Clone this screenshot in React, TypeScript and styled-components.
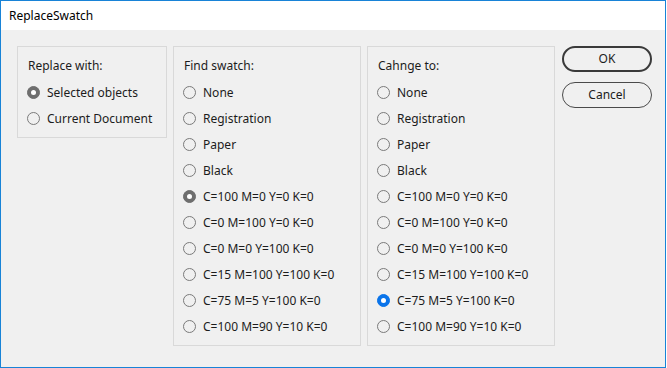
import React, { ReactElement } from 'react';
import styled, { createGlobalStyle } from 'styled-components';

const GlobalStyle = createGlobalStyle`
  html, body {
    margin: 0;
    padding: 0;
    background: #ffffff;
  }
  body {
    font-family: 'Noto Sans', 'Open Sans', sans-serif;
    font-size: 12px;
    color: #1c1c1c;
  }
`;

const Window = styled.div`
  width: 666px;
  height: 368px;
  box-sizing: border-box;
  border: 1px solid #1883d7;
  background-color: #f0f0f0;
  display: flex;
  flex-direction: column;
`;

const TitleBar = styled.div`
  height: 29px;
  flex-shrink: 0;
  background-color: #ffffff;
  display: flex;
  align-items: center;
  padding-left: 8px;
  font-size: 12px;
  color: #000000;
`;

const Body = styled.div`
  display: flex;
  align-items: flex-start;
  gap: 6px;
  padding: 16px 0 0 16px;
`;

const Group = styled.div<{ width: number }>`
  width: ${(p) => p.width}px;
  box-sizing: border-box;
  border: 1px solid #d9d9d9;
  padding: 6px 0 6px 9px;
  display: flex;
  flex-direction: column;
`;

const GroupTitle = styled.div`
  height: 26px;
  line-height: 26px;
  padding-left: 1px;
  white-space: nowrap;
`;

const RadioRow = styled.label`
  height: 26px;
  display: flex;
  align-items: center;
  gap: 7px;
  white-space: nowrap;
`;

const RadioMark = styled.span<{ checked?: boolean; tone?: 'grey' | 'blue' }>`
  width: 13px;
  height: 13px;
  box-sizing: border-box;
  border-radius: 50%;
  flex-shrink: 0;
  position: relative;
  border: 1px solid
    ${(p) => (!p.checked ? '#7a7a7a' : p.tone === 'blue' ? '#0a74ea' : '#6e6e6e')};
  background-color: ${(p) =>
    !p.checked ? 'transparent' : p.tone === 'blue' ? '#0a74ea' : '#6e6e6e'};

  &::after {
    content: '';
    display: ${(p) => (p.checked ? 'block' : 'none')};
    position: absolute;
    left: 3px;
    top: 3px;
    width: 5px;
    height: 5px;
    border-radius: 50%;
    background-color: #ffffff;
  }
`;

const ButtonColumn = styled.div`
  display: flex;
  flex-direction: column;
  gap: 10px;
  padding-left: 1px;
`;

const DialogButton = styled.button<{ primary?: boolean }>`
  width: 90px;
  height: 26px;
  box-sizing: border-box;
  border-radius: 13px;
  border: ${(p) => (p.primary ? '2px solid #3a3a3a' : '1px solid #4a4a4a')};
  background-color: #f0f0f0;
  font-family: inherit;
  font-size: 12px;
  color: #1c1c1c;
  padding: 0 0 2px;
`;

const swatches = [
  'None',
  'Registration',
  'Paper',
  'Black',
  'C=100 M=0 Y=0 K=0',
  'C=0 M=100 Y=0 K=0',
  'C=0 M=0 Y=100 K=0',
  'C=15 M=100 Y=100 K=0',
  'C=75 M=5 Y=100 K=0',
  'C=100 M=90 Y=10 K=0',
];

type RadioGroupProps = {
  title: string;
  options: string[];
  selected: number;
  tone: 'grey' | 'blue';
  width: number;
};

const RadioGroup = ({ title, options, selected, tone, width }: RadioGroupProps): ReactElement => (
  <Group width={width}>
    <GroupTitle>{title}</GroupTitle>
    {options.map((o, i) => (
      <RadioRow key={o}>
        <RadioMark checked={i === selected} tone={tone} />
        {o}
      </RadioRow>
    ))}
  </Group>
);

const App = (): ReactElement => {
  return (
    <>
      <GlobalStyle />
      <Window>
        <TitleBar>ReplaceSwatch</TitleBar>
        <Body>
          <RadioGroup
            title="Replace with:"
            options={['Selected objects', 'Current Document']}
            selected={0}
            tone="grey"
            width={150}
          />
          <RadioGroup title="Find swatch:" options={swatches} selected={4} tone="grey" width={188} />
          <RadioGroup title="Cahnge to:" options={swatches} selected={8} tone="blue" width={188} />
          <ButtonColumn>
            <DialogButton primary>OK</DialogButton>
            <DialogButton>Cancel</DialogButton>
          </ButtonColumn>
        </Body>
      </Window>
    </>
  );
};

export default App;
